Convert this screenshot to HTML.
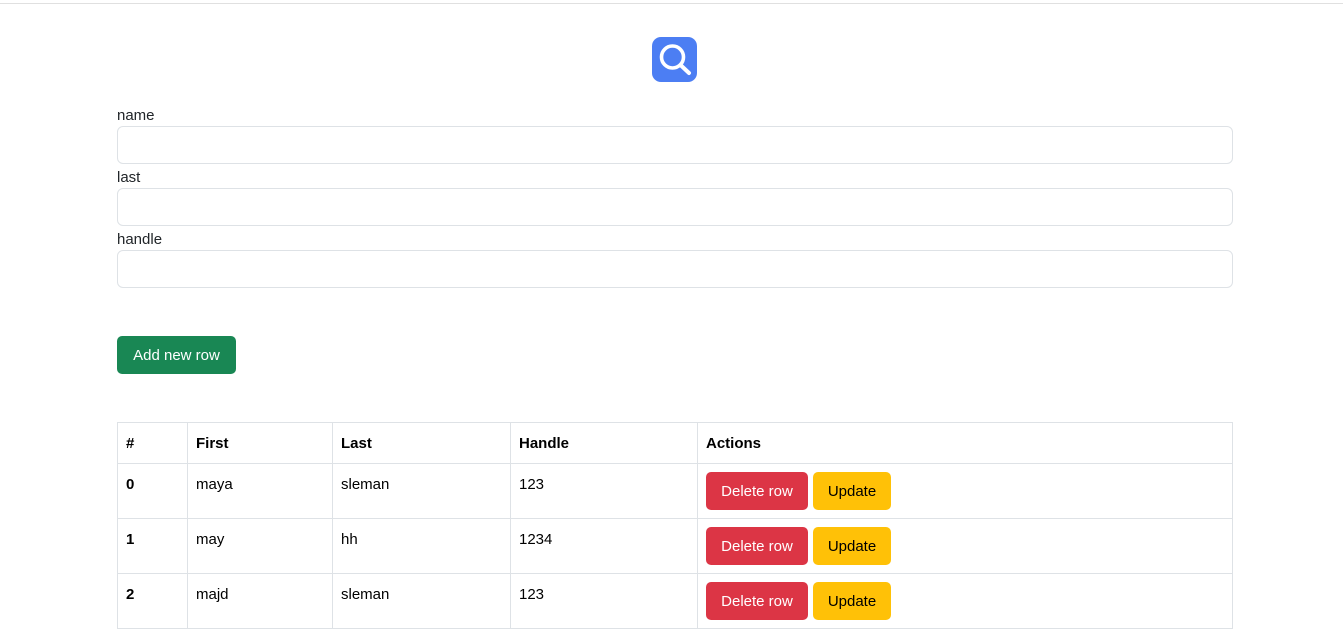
<!DOCTYPE html><html><head><style>
*{box-sizing:border-box;margin:0;padding:0}
body{width:1343px;height:640px;background:#fff;font-family:"Liberation Sans",sans-serif;font-size:15px;color:#212529;position:relative;overflow:hidden}
.a{position:absolute}
.h{position:absolute;left:117px;width:1116px;height:1px;background:#dee2e6}
.v{position:absolute;top:422px;width:1px;height:207px;background:#dee2e6}
.t{position:absolute;color:#000}
.inp{position:absolute;left:117px;width:1116px;height:38px;border:1px solid #dee2e6;border-radius:6px}
.btn{position:absolute;border-radius:5px;height:38px;line-height:40px;text-align:center;font-size:15px}
</style></head><body>
<div class="a" style="left:0;top:3px;width:1343px;height:1px;background:#e0e0e0"></div>
<div class="a" style="left:652px;top:37px;width:45px;height:45px;background:#4c7ef3;border-radius:9px">
<svg width="45" height="45" viewBox="0 0 45 45"><circle cx="20.5" cy="20" r="11" fill="none" stroke="#fff" stroke-width="3.6"/><line x1="28.5" y1="28" x2="37" y2="36" stroke="#fff" stroke-width="4" stroke-linecap="round"/></svg></div>
<div class="a" style="left:117px;top:107px">name</div>
<div class="inp" style="top:126px"></div>
<div class="a" style="left:117px;top:169px">last</div>
<div class="inp" style="top:188px"></div>
<div class="a" style="left:117px;top:231px">handle</div>
<div class="inp" style="top:250px"></div>
<div class="btn" style="left:117px;top:336px;width:119px;background:#198754;color:#fff">Add new row</div>

<div class="h" style="top:422px"></div><div class="h" style="top:463px"></div><div class="h" style="top:518px"></div><div class="h" style="top:573px"></div><div class="h" style="top:628px"></div>
<div class="v" style="left:117px"></div><div class="v" style="left:187px"></div><div class="v" style="left:332px"></div><div class="v" style="left:510px"></div><div class="v" style="left:697px"></div><div class="v" style="left:1232px"></div>

<b class="t" style="left:126px;top:435px">#</b><b class="t" style="left:196px;top:435px">First</b><b class="t" style="left:341px;top:435px">Last</b><b class="t" style="left:519px;top:435px">Handle</b><b class="t" style="left:706px;top:435px">Actions</b>
<b class="t" style="left:126px;top:476px">0</b><span class="t" style="left:196px;top:476px">maya</span><span class="t" style="left:341px;top:476px">sleman</span><span class="t" style="left:519px;top:476px">123</span>
<b class="t" style="left:126px;top:531px">1</b><span class="t" style="left:196px;top:531px">may</span><span class="t" style="left:341px;top:531px">hh</span><span class="t" style="left:519px;top:531px">1234</span>
<b class="t" style="left:126px;top:586px">2</b><span class="t" style="left:196px;top:586px">majd</span><span class="t" style="left:341px;top:586px">sleman</span><span class="t" style="left:519px;top:586px">123</span>

<div class="btn" style="left:706px;top:472px;width:102px;background:#dc3545;color:#fff">Delete row</div>
<div class="btn" style="left:813px;top:472px;width:78px;background:#ffc107;color:#000">Update</div>
<div class="btn" style="left:706px;top:527px;width:102px;background:#dc3545;color:#fff">Delete row</div>
<div class="btn" style="left:813px;top:527px;width:78px;background:#ffc107;color:#000">Update</div>
<div class="btn" style="left:706px;top:582px;width:102px;background:#dc3545;color:#fff">Delete row</div>
<div class="btn" style="left:813px;top:582px;width:78px;background:#ffc107;color:#000">Update</div>
</body></html>
